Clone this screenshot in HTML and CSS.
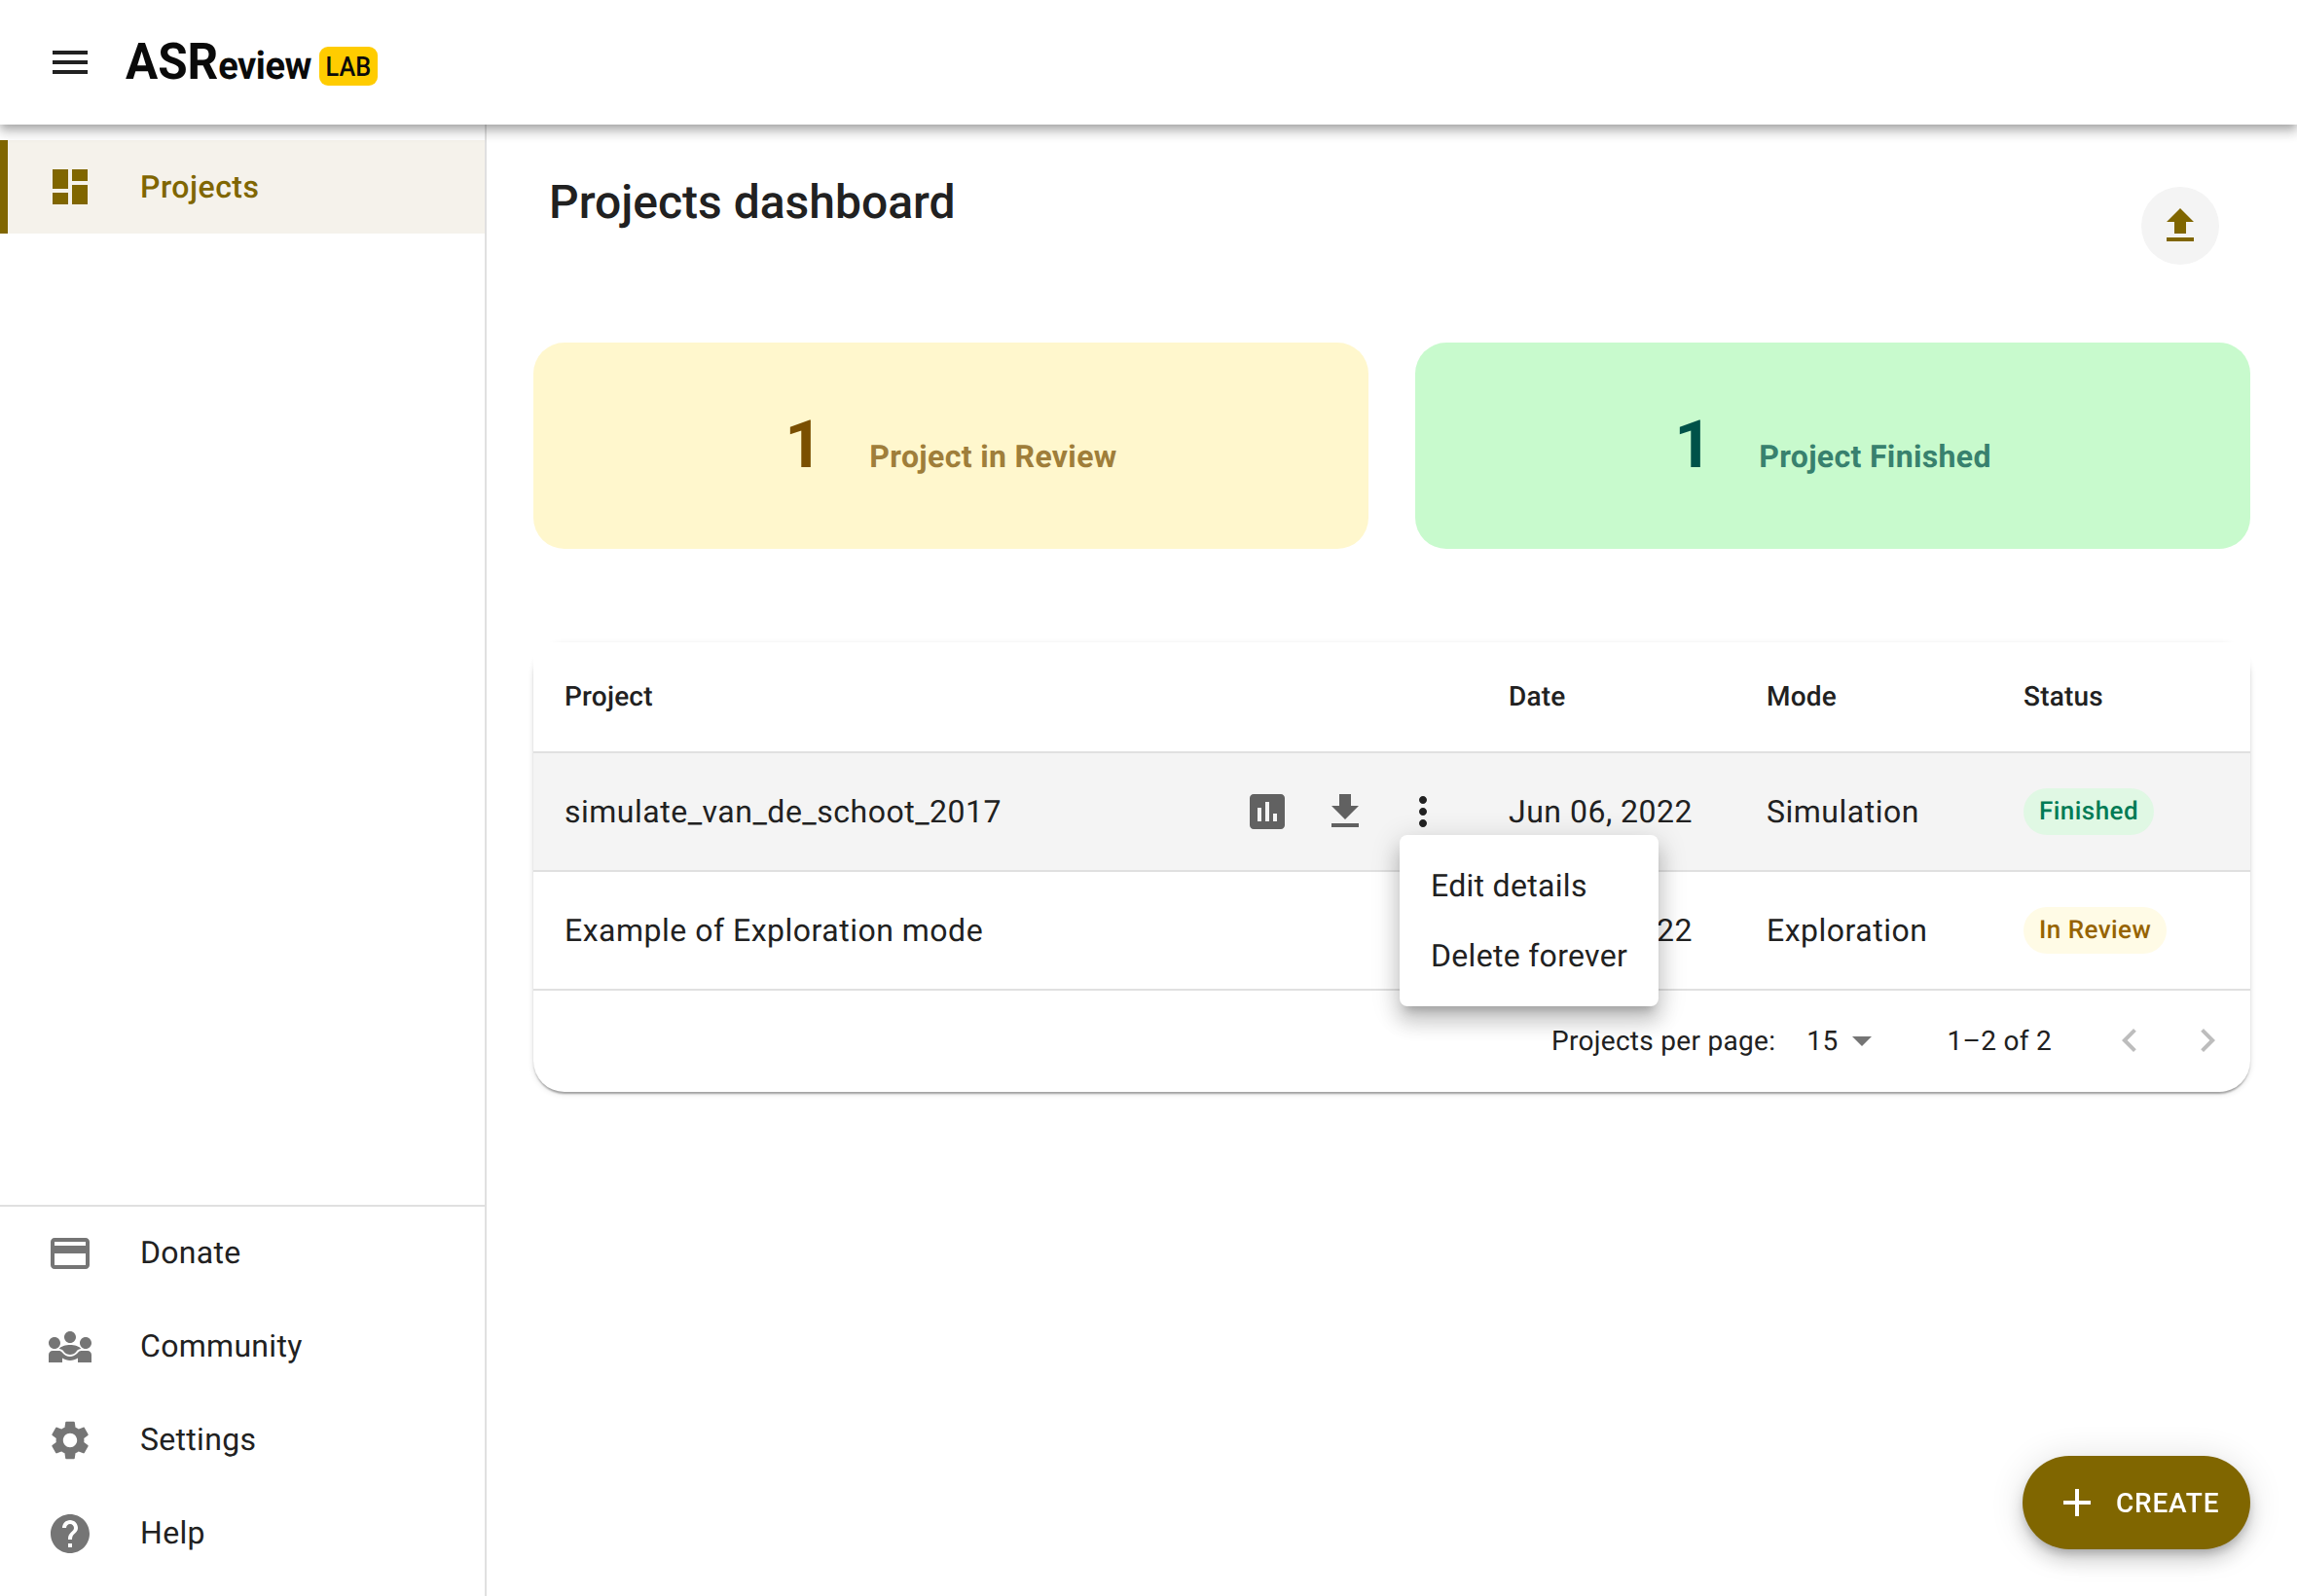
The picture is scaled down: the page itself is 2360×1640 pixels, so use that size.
FILE: index.html
```html
<!DOCTYPE html>
<html lang="en">
<head>
    <meta charset="UTF-8">
    <title>ASReview LAB</title>
    <link rel="stylesheet" href="styles.css">
</head>
<body>

<header class="topbar">
    <svg class="icon icon-menu" viewBox="0 0 24 24"><path d="M3 18h18v-2H3v2zm0-5h18v-2H3v2zm0-7v2h18V6H3z"/></svg>
    <div class="logo">
        <span class="logo-text"><span class="logo-caps">ASR</span>eview</span>
        <span class="logo-lab"><span>LAB</span></span>
    </div>
</header>

<div class="layout">
    <nav class="sidebar">
        <a class="nav-item nav-active">
            <svg class="icon" viewBox="0 0 24 24"><path d="M3 13h8V3H3v10zm0 8h8v-6H3v6zm10 0h8V11h-8v10zm0-18v6h8V3h-8z"/></svg>
            <span>Projects</span>
        </a>
        <div class="nav-bottom">
            <a class="nav-item">
                <svg class="icon" viewBox="0 0 24 24"><path d="M20 4H4c-1.11 0-1.99.89-1.99 2L2 18c0 1.11.89 2 2 2h16c1.11 0 2-.89 2-2V6c0-1.11-.89-2-2-2zm0 14H4v-6h16v6zm0-10H4V6h16v2z"/></svg>
                <span>Donate</span>
            </a>
            <a class="nav-item">
                <svg class="icon" viewBox="0 0 24 24"><path d="M6.32 13.01c.96.02 1.85.5 2.45 1.34C9.5 15.38 10.71 16 12 16c1.29 0 2.5-.62 3.23-1.66.6-.84 1.49-1.32 2.45-1.34-.72-1.22-3.6-2-5.68-2-2.07 0-4.96.78-5.68 2.01zM4 13c1.66 0 3-1.34 3-3S5.66 7 4 7s-3 1.34-3 3 1.34 3 3 3zm16 0c1.66 0 3-1.34 3-3s-1.34-3-3-3-3 1.34-3 3 1.34 3 3 3zm-8-3c1.66 0 3-1.34 3-3s-1.34-3-3-3-3 1.34-3 3 1.34 3 3 3z"/><path d="M21 14h-3.27c-.77 0-1.35.45-1.68.92-.04.06-1.36 2.08-4.05 2.08-1.43 0-3.03-.64-4.05-2.08C7.56 14.2 6.8 14 6.27 14H3c-1.1 0-2 .9-2 2v4h7v-2.26c1.15.8 2.54 1.26 4 1.26s2.85-.46 4-1.26V20h7v-4c0-1.1-.9-2-2-2z"/></svg>
                <span>Community</span>
            </a>
            <a class="nav-item">
                <svg class="icon" viewBox="0 0 24 24"><path d="M19.14 12.94c.04-.3.06-.61.06-.94 0-.32-.02-.64-.07-.94l2.03-1.58c.18-.14.23-.41.12-.61l-1.92-3.32c-.12-.22-.37-.29-.59-.22l-2.39.96c-.5-.38-1.03-.7-1.62-.94l-.36-2.54c-.04-.24-.24-.41-.48-.41h-3.84c-.24 0-.43.17-.47.41l-.36 2.54c-.59.24-1.13.57-1.62.94l-2.39-.96c-.22-.08-.47 0-.59.22L2.74 8.87c-.12.21-.08.47.12.61l2.03 1.58c-.05.3-.09.63-.09.94s.02.64.07.94l-2.03 1.58c-.18.14-.23.41-.12.61l1.92 3.32c.12.22.37.29.59.22l2.39-.96c.5.38 1.03.7 1.62.94l.36 2.54c.05.24.24.41.48.41h3.84c.24 0 .44-.17.47-.41l.36-2.54c.59-.24 1.13-.56 1.62-.94l2.39.96c.22.08.47 0 .59-.22l1.92-3.32c.12-.22.07-.47-.12-.61l-2.01-1.58zM12 15.6c-1.98 0-3.6-1.62-3.6-3.6s1.62-3.6 3.6-3.6 3.6 1.62 3.6 3.6-1.62 3.6-3.6 3.6z"/></svg>
                <span>Settings</span>
            </a>
            <a class="nav-item">
                <svg class="icon" viewBox="0 0 24 24"><path d="M12 2C6.48 2 2 6.48 2 12s4.48 10 10 10 10-4.48 10-10S17.52 2 12 2zm1 17h-2v-2h2v2zm2.07-7.75l-.9.92C13.45 12.9 13 13.5 13 15h-2v-.5c0-1.1.45-2.1 1.17-2.83l1.24-1.26c.37-.36.59-.86.59-1.41 0-1.1-.9-2-2-2s-2 .9-2 2H8c0-2.21 1.79-4 4-4s4 1.79 4 4c0 .88-.36 1.68-.93 2.25z"/></svg>
                <span>Help</span>
            </a>
        </div>
    </nav>

    <main class="content">
        <div class="title-row">
            <h1 class="title">Projects dashboard</h1>
            <button class="upload-btn">
                <svg class="icon" viewBox="0 0 24 24"><path d="M9 16h6v-6h4l-7-7-7 7h4zm-4 2h14v2H5z"/></svg>
            </button>
        </div>

        <div class="stats">
            <div class="stat stat-review">
                <span class="stat-num">1</span>
                <span class="stat-label">Project in Review</span>
            </div>
            <div class="stat stat-finished">
                <span class="stat-num">1</span>
                <span class="stat-label">Project Finished</span>
            </div>
        </div>

        <div class="table-card">
            <div class="row row-head">
                <div class="cell-project">Project</div>
                <div class="cell-date">Date</div>
                <div class="cell-mode">Mode</div>
                <div class="cell-status">Status</div>
            </div>
            <div class="row row-hover">
                <div class="cell-project">
                    <span class="project-name">simulate_van_de_schoot_2017</span>
                    <div class="row-actions">
                        <svg class="icon" viewBox="0 0 24 24"><path d="M19 3H5c-1.1 0-2 .9-2 2v14c0 1.1.9 2 2 2h14c1.1 0 2-.9 2-2V5c0-1.1-.9-2-2-2zM9 17H7v-7h2v7zm4 0h-2V7h2v10zm4 0h-2v-4h2v4z"/></svg>
                        <svg class="icon" viewBox="0 0 24 24"><path d="M19 9h-4V3H9v6H5l7 7 7-7zM5 18v2h14v-2H5z"/></svg>
                        <svg class="icon icon-dark" viewBox="0 0 24 24"><path d="M12 8c1.1 0 2-.9 2-2s-.9-2-2-2-2 .9-2 2 .9 2 2 2zm0 2c-1.1 0-2 .9-2 2s.9 2 2 2 2-.9 2-2-.9-2-2-2zm0 6c-1.1 0-2 .9-2 2s.9 2 2 2 2-.9 2-2-.9-2-2-2z"/></svg>
                    </div>
                </div>
                <div class="cell-date">Jun 06, 2022</div>
                <div class="cell-mode">Simulation</div>
                <div class="cell-status"><span class="chip chip-finished">Finished</span></div>
            </div>
            <div class="row">
                <div class="cell-project"><span class="project-name">Example of Exploration mode</span></div>
                <div class="cell-date">Jun 06, 2022</div>
                <div class="cell-mode">Exploration</div>
                <div class="cell-status"><span class="chip chip-review">In Review</span></div>
            </div>
            <div class="pager">
                <span>Projects per page:</span>
                <span class="pager-size">15</span>
                <svg class="icon icon-caret" viewBox="0 0 24 24"><path d="M7 10l5 5 5-5z"/></svg>
                <span class="pager-count">1–2 of 2</span>
                <svg class="icon icon-off" viewBox="0 0 24 24"><path d="M15.41 7.41L14 6l-6 6 6 6 1.41-1.41L10.83 12z"/></svg>
                <svg class="icon icon-off icon-next" viewBox="0 0 24 24"><path d="M10 6L8.59 7.41 13.17 12l-4.58 4.59L10 18l6-6z"/></svg>
            </div>

            <div class="menu">
                <div class="menu-item">Edit details</div>
                <div class="menu-item">Delete forever</div>
            </div>
        </div>
    </main>
</div>

<button class="fab">
    <svg class="icon" viewBox="0 0 24 24"><path d="M19 13h-6v6h-2v-6H5v-2h6V5h2v6h6v2z"/></svg>
    <span>CREATE</span>
</button>

</body>
</html>
```

FILE: styles.css
```css
* {
    box-sizing: border-box;
}
html, body {
    height: 100%;
}
body {
    margin: 0;
    font-family: Roboto, "Liberation Sans", sans-serif;
    color: #212121;
    background: white;
    overflow: hidden;
    text-rendering: geometricPrecision;
}
.icon {
    width: 48px;
    height: 48px;
    flex: none;
    fill: #757575;
    display: block;
}

/* top bar */
.topbar {
    position: relative;
    z-index: 2;
    height: 128px;
    display: flex;
    align-items: center;
    padding-left: 48px;
    background: white;
    box-shadow: 0 4px 8px -2px rgba(0, 0, 0, 0.2), 0 8px 10px 1px rgba(0, 0, 0, 0.14), 0 2px 16px 1px rgba(0, 0, 0, 0.12);
}
.icon-menu {
    fill: #212121;
}
.logo {
    display: flex;
    align-items: flex-start;
    margin-left: 33px;
    height: 48px;
    margin-top: 16px;
}
.logo-text {
    display: block;
    width: 199px;
    margin-top: -8px;
    transform: scaleX(0.95);
    transform-origin: left;
    font-weight: 700;
    font-size: 40px;
    line-height: 48px;
    color: #0a0a0a;
    white-space: nowrap;
    letter-spacing: -0.5px;
}
.logo-caps {
    font-size: 52px;
    letter-spacing: 0;
}
.logo-lab {
    width: 60px;
    height: 40px;
    border-radius: 9px;
    background: #ffcc00;
    color: #0a0a0a;
    font-size: 28px;
    font-weight: 500;
    line-height: 41px;
    text-align: center;
}
.logo-lab span {
    display: inline-block;
    transform: scaleX(0.9);
}

.layout {
    display: flex;
    height: calc(100% - 128px);
}

/* sidebar */
.sidebar {
    width: 500px;
    flex: none;
    padding-top: 16px;
    border-right: 2px solid #e0e0e0;
    display: flex;
    flex-direction: column;
    justify-content: space-between;
}
.nav-item {
    height: 96px;
    display: flex;
    align-items: center;
    gap: 48px;
    padding-left: 48px;
    font-size: 32px;
    letter-spacing: 0.3px;
}
.nav-active {
    padding-left: 40px;
    border-left: 8px solid #806600;
    background: #f5f2eb;
    color: #806600;
    font-weight: 500;
    letter-spacing: 0.5px;
}
.nav-active .icon {
    fill: #806600;
}
.nav-bottom {
    padding-bottom: 16px;
    border-top: 2px solid #e0e0e0;
}
.nav-bottom span {
    margin-top: -2px;
}

/* main area */
.content {
    flex: 1;
    padding: 0 48px;
}
.title-row {
    display: flex;
    justify-content: space-between;
    align-items: flex-start;
    height: 224px;
    padding: 48px 32px 0 16px;
}
.title {
    margin: 0;
    font-size: 48px;
    font-weight: 500;
    line-height: 64px;
}
.upload-btn {
    width: 80px;
    height: 80px;
    margin-top: 16px;
    padding: 16px;
    border: 0;
    border-radius: 50%;
    background: #f4f4f4;
}
.upload-btn .icon {
    fill: #806600;
}

/* stat cards */
.stats {
    display: flex;
    gap: 48px;
}
.stat {
    flex: 1;
    height: 212px;
    border-radius: 32px;
    display: flex;
    align-items: baseline;
    justify-content: center;
    gap: 48px;
    padding-top: 65px;
}
.stat-num {
    font-size: 68px;
    font-weight: 700;
    line-height: 80px;
}
.stat-label {
    font-size: 32px;
    font-weight: 700;
    letter-spacing: 0.35px;
}
.stat-review {
    background: #fff7cd;
}
.stat-review .stat-num {
    color: #7a4f01;
}
.stat-review .stat-label {
    color: #9f7e3a;
}
.stat-finished {
    background: #c8facd;
}
.stat-finished .stat-num {
    color: #005249;
}
.stat-finished .stat-label {
    color: #38816e;
}

/* table */
.table-card {
    position: relative;
    margin-top: 96px;
    border-radius: 32px;
    background: white;
    box-shadow: 0 4px 2px -2px rgba(0, 0, 0, 0.2), 0 2px 2px rgba(0, 0, 0, 0.14), 0 2px 6px rgba(0, 0, 0, 0.12);
}
.row {
    display: grid;
    grid-template-columns: 1002px 265px 264px 1fr;
    align-items: center;
    height: 122px;
    border-bottom: 2px solid #e0e0e0;
    font-size: 32px;
    letter-spacing: 0.5px;
}
.row-head {
    height: 114px;
    padding-bottom: 2px;
    background: white;
    font-size: 28px;
    font-weight: 500;
    letter-spacing: 0.2px;
}
.row-hover {
    background: #f4f4f4;
}
.cell-project {
    display: flex;
    align-items: center;
    padding-left: 32px;
}
.row-actions {
    display: flex;
    gap: 32px;
    margin-left: auto;
    margin-right: 64px;
}
.row-actions .icon {
    fill: #616161;
}
.row-actions .icon-dark {
    fill: #212121;
}
.chip {
    display: inline-block;
    height: 48px;
    padding: 0 16px;
    border-radius: 24px;
    font-size: 26px;
    font-weight: 500;
    line-height: 48px;
    letter-spacing: 0.45px;
}
.chip-finished {
    background: #e0f8e4;
    color: #007b55;
}
.chip-review {
    background: #fffbe6;
    color: #966300;
}

/* pagination */
.pager {
    display: flex;
    align-items: center;
    justify-content: flex-end;
    height: 104px;
    padding: 0 20px 2px 0;
    font-size: 28px;
    letter-spacing: 0.3px;
}
.pager-size {
    margin-left: 32px;
}
.icon-caret {
    margin-left: 1px;
}
.pager-count {
    margin: 0 56px 0 63px;
}
.icon-off {
    fill: #bdbdbd;
}
.icon-next {
    margin-left: 32px;
}

/* row menu, opened over the table */
.menu {
    position: absolute;
    left: 890px;
    top: 198px;
    width: 266px;
    padding: 16px 0;
    border-radius: 8px;
    background: white;
    box-shadow: 0 10px 10px -6px rgba(0, 0, 0, 0.2), 0 16px 20px 2px rgba(0, 0, 0, 0.14), 0 6px 28px 4px rgba(0, 0, 0, 0.12);
}
.menu-item {
    height: 72px;
    padding-left: 32px;
    font-size: 32px;
    letter-spacing: 0.3px;
    line-height: 72px;
}

/* floating button */
.fab {
    position: fixed;
    right: 48px;
    bottom: 48px;
    width: 234px;
    height: 96px;
    display: flex;
    align-items: center;
    gap: 16px;
    padding: 0 0 0 32px;
    border: 0;
    border-radius: 48px;
    background: #806600;
    color: white;
    font-family: Roboto, sans-serif;
    font-size: 28px;
    font-weight: 500;
    letter-spacing: 0.8px;
    box-shadow: 0 6px 10px -2px rgba(0, 0, 0, 0.2), 0 12px 20px rgba(0, 0, 0, 0.14), 0 2px 36px rgba(0, 0, 0, 0.12);
}
.fab .icon {
    fill: white;
}
```
